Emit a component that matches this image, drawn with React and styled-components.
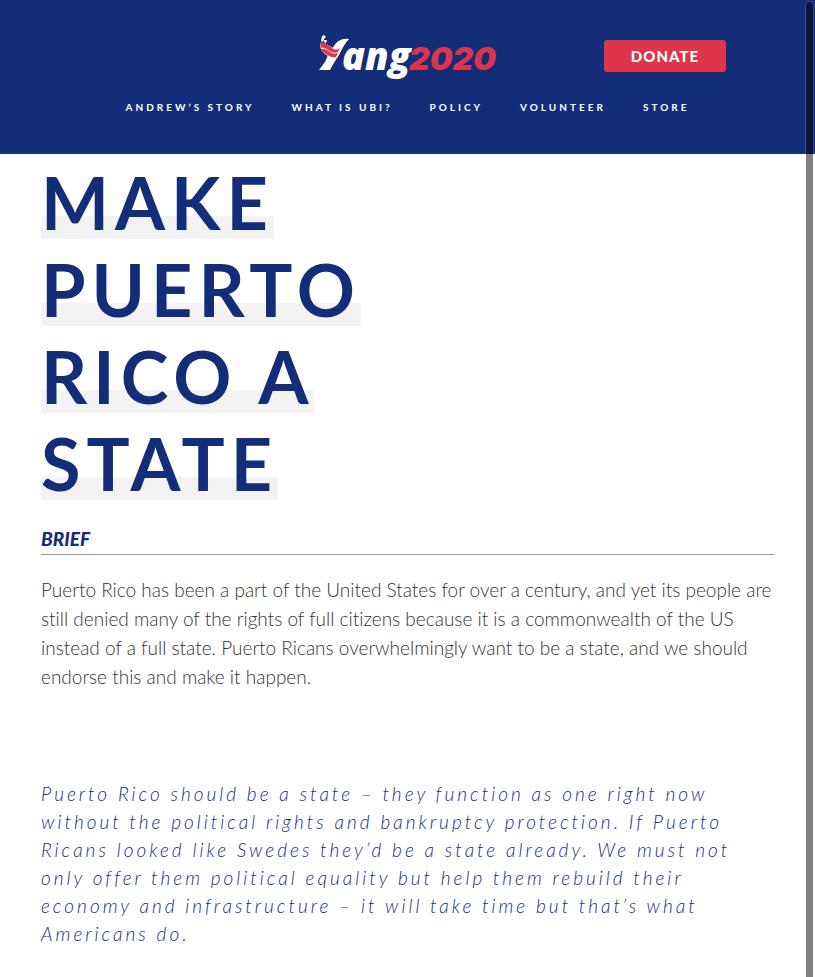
import React from "react";
import styled, { createGlobalStyle } from "styled-components";

const navy = "#142d79";
const red = "#dc344a";

const GlobalStyle = createGlobalStyle`
  * { box-sizing: border-box; }
  body {
    margin: 0;
    background: #fff;
    color: #333;
    font-family: "Lato", "Avenir", sans-serif;
    font-variant-ligatures: none;
  }
`;

const Header = styled.header`
  background: ${navy};
  padding: 32px 40px 40px;
`;

const TopRow = styled.div`
  display: grid;
  grid-template-columns: 1fr auto 1fr;
  align-items: center;
  height: 48px;
`;

const HomeLink = styled.a`
  grid-column: 2;
  display: block;
  height: 48px;
`;

const LogoMark = styled.svg`
  display: block;
  overflow: visible;
`;

const DonateButton = styled.button`
  justify-self: end;
  width: 122px;
  height: 32px;
  margin-right: 49px;
  padding: 0;
  border: 0;
  border-radius: 3px;
  background: ${red};
  color: #fff;
  font: 900 15px/32px "Lato", sans-serif;
  letter-spacing: 1px;
  cursor: pointer;
`;

const Nav = styled.nav`
  display: flex;
  justify-content: center;
  gap: 37px;
  margin-top: 20px;
`;

const NavLink = styled.a`
  color: #fff;
  font-size: 10px;
  font-weight: 700;
  line-height: 14px;
  letter-spacing: 3px;
  text-transform: uppercase;
  text-decoration: none;
  white-space: nowrap;
`;

const Main = styled.main`
  padding: 5px 41px 40px;
`;

const Title = styled.h1`
  margin: 0;
  color: ${navy};
  font-size: 72px;
  font-weight: 700;
  line-height: 87px;
  letter-spacing: 6px;
  text-transform: uppercase;
`;

const TitleLine = styled.span`
  display: table;
  background: linear-gradient(transparent 57px, #f3f3f3 57px, #f3f3f3 80px, transparent 80px);
`;

const SectionHeading = styled.h2`
  margin: 20px 0 20px;
  padding-bottom: 3px;
  border-bottom: 1px solid #999;
  color: ${navy};
  font-size: 19px;
  font-weight: 900;
  font-style: italic;
  line-height: 24px;
  text-transform: uppercase;
`;

const Brief = styled.p`
  margin: 0;
  color: #333;
  font-size: 19px;
  font-weight: 300;
  line-height: 29px;
`;

const Quote = styled.blockquote`
  margin: 89px 0 0;
  color: ${navy};
  font-size: 19px;
  font-style: italic;
  font-weight: 300;
  line-height: 28px;
  letter-spacing: 3px;
`;

const ScrollThumb = styled.div`
  position: fixed;
  top: 1px;
  right: 1px;
  bottom: 0;
  width: 9px;
  border: 1px solid rgba(255, 255, 255, 0.15);
  border-bottom: 0;
  border-radius: 5px 5px 0 0;
  background: rgba(0, 0, 0, 0.5);
  background-clip: padding-box;
`;

const LogoText = styled.text`
  font-family: ${(p) => p.$family}, sans-serif;
  font-size: ${(p) => p.$size}px;
  font-weight: 900;
  font-style: italic;
  fill: ${(p) => p.$color};
`;

const navItems = ["Andrew’s Story", "What is UBI?", "Policy", "Volunteer", "Store"];
const titleLines = ["Make", "Puerto", "Rico a", "State"];

function Logo() {
  return (
    <LogoMark width="178" height="48" viewBox="0 0 178 48" role="img" aria-label="Yang 2020">
      <path
        d="M0 38 L11 38 C13 34 16 29 20 23 C23 17 26 11 30 7 C23 6 18 9 15 14 L12 18 L9 22 C8 28 4 33 0 38 Z"
        fill="#fff"
      />
      <path d="M1 11 C6 10 10 14 14 16 C17 17 19 17 21 15 L18 25 C13 26 9 24 6 22 C3 20 1 17 1 11 Z" fill="#fff" />
      <path d="M1 11 C6 10 9 13 13 16 C16 18 18 18 21 16 L19 20 C15 22 12 20 9 18 C6 16 4 15 2 16 Z" fill={red} />
      <path d="M2 17 C5 16 8 18 11 20 C14 22 16 22 19 21 L17 25 C13 26 10 24 7 22 C5 21 4 20 3 20 Z" fill={red} />
      <path d="M3 4 L5 3 L7 5 L5 7 L4 10 L2 9 Z" fill="#fff" />
      <path d="M5 8 L8 8 L7 11 L5 10 Z" fill="#fff" />
      <LogoText x="23" y="38" $family='"Open Sans"' $size="38" $color="#fff">ang</LogoText>
      <LogoText x="90" y="38" $family='"Inter"' $size="32" $color={red}>2020</LogoText>
    </LogoMark>
  );
}

export default function App() {
  return (
    <>
      <GlobalStyle />
      <Header>
        <TopRow>
          <HomeLink href="#home"><Logo /></HomeLink>
          <DonateButton type="button">DONATE</DonateButton>
        </TopRow>
        <Nav aria-label="Main">
          {navItems.map((item) => (
            <NavLink key={item} href="#">{item}</NavLink>
          ))}
        </Nav>
      </Header>
      <Main>
        <Title>
          {titleLines.map((line) => (
            <TitleLine key={line}>{line}</TitleLine>
          ))}
        </Title>
        <SectionHeading>Brief</SectionHeading>
        <Brief>
          Puerto Rico has been a part of the United States for over a century, and yet its people
          are still denied many of the rights of full citizens because it is a commonwealth of the
          US instead of a full state. Puerto Ricans overwhelmingly want to be a state, and we
          should endorse this and make it happen.
        </Brief>
        <Quote>
          Puerto Rico should be a state – they function as one right now without the political
          rights and bankruptcy protection. If Puerto Ricans looked like Swedes they’d be a state
          already. We must not only offer them political equality but help them rebuild their
          economy and infrastructure – it will take time but that’s what Americans do.
        </Quote>
      </Main>
      <ScrollThumb aria-hidden="true" />
    </>
  );
}
